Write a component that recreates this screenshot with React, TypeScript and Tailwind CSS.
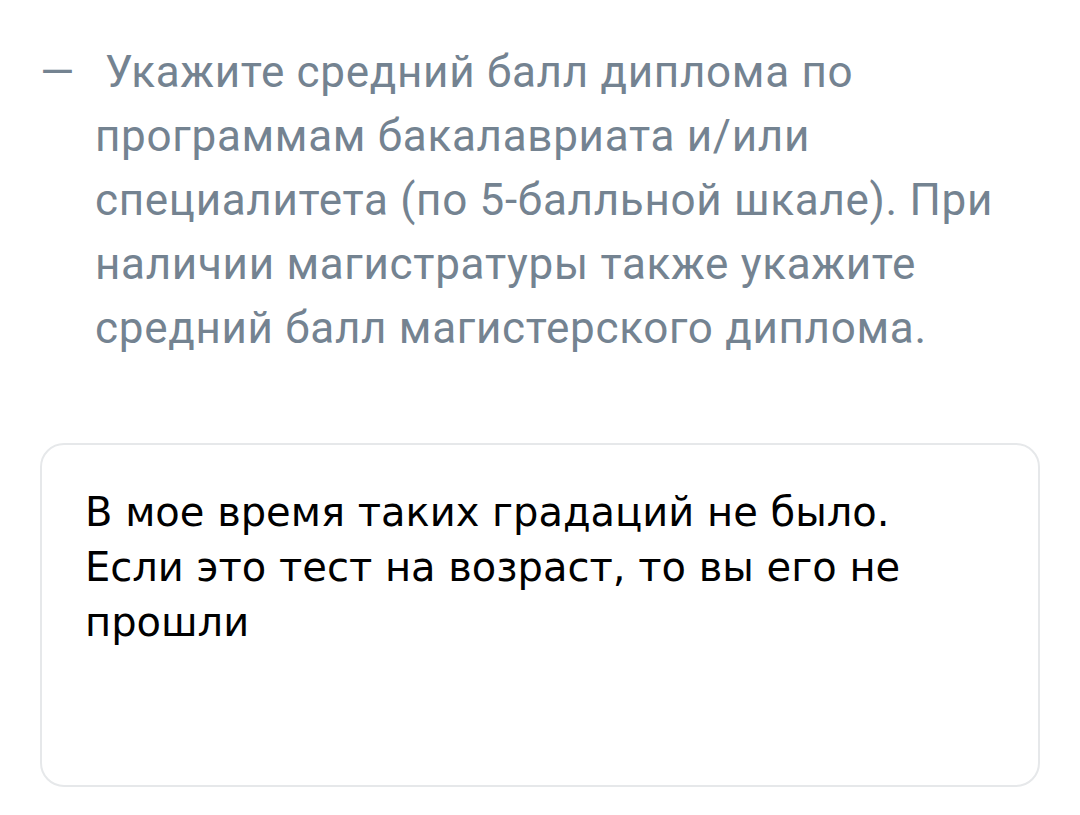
export default function App() {
  return (
    <div className="min-h-screen bg-white px-10 pt-[40px] font-['Roboto','Liberation_Sans',sans-serif]">
      {/* Question hint */}
      <div className="flex text-[44px] leading-[64px] tracking-[0.7px] text-[#748391]">
        <span className="w-[55px] shrink-0">—</span>
        <p className="indent-[10px]">
          Укажите средний балл диплома по
          <br />
          программам бакалавриата и/или
          <br />
          специалитета (по 5-балльной шкале). При
          <br />
          наличии магистратуры также укажите
          <br />
          средний балл магистерского диплома.
        </p>
      </div>

      {/* Answer field */}
      <div className="mt-[83px] h-[344px] w-[1000px] rounded-[24px] border-2 border-[#e6e8ea] px-[43px] pt-[40px]">
        <p className="font-['DejaVu_Sans','Liberation_Sans',sans-serif] text-[40px] leading-[55px] text-black">
          В мое время таких градаций не было.
          <br />
          Если это тест на возраст, то вы его не
          <br />
          прошли
        </p>
      </div>
    </div>
  )
}
